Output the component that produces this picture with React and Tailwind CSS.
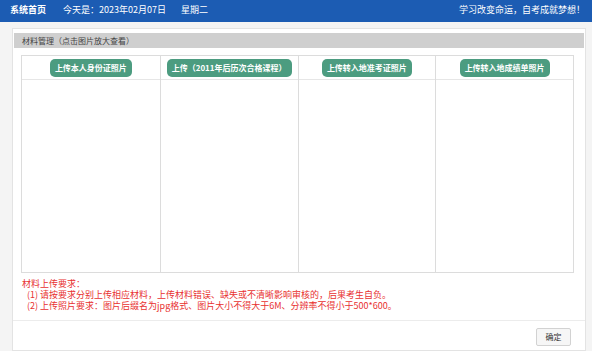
const UPLOADS = [
  "上传本人身份证照片",
  "上传（2011年后历次合格课程）",
  "上传转入地准考证照片",
  "上传转入地成绩单照片",
];

export default function App() {
  return (
    <div className="min-h-[351px] bg-[#f4f4f4] font-['Noto_Sans_CJK_SC',sans-serif] text-[#333]">
      <header className="flex h-[22px] items-center justify-between bg-[#1c5cb3] pb-[3px] pl-[10px] pr-[7px] text-[9px] leading-none text-white">
        <div className="flex items-center">
          <span className="font-bold">系统首页</span>
          <span className="ml-[17px]">今天是：2023年02月07日</span>
          <span className="ml-[15px]">星期二</span>
        </div>
        <span>学习改变命运，自考成就梦想！</span>
      </header>

      <div className="pl-[12px] pr-[6px] pt-[6px]">
        <div className="h-[323px] border border-[#e3e3e3] bg-white">
          <div className="mx-[1px] mt-[4px] flex h-[15px] items-center bg-[#cfcfcf] pl-[8px] text-[8px] leading-none text-[#444]">
            材料管理（点击图片放大查看）
          </div>

          <div className="ml-[8px] mr-[11px] mt-[7px] grid grid-cols-4 border border-[#dcdcdc]">
            {UPLOADS.map((label, i) => (
              <div
                key={label}
                className={`flex flex-col ${i > 0 ? "border-l border-[#dcdcdc]" : ""}`}
              >
                <div className="flex h-[24px] items-center justify-center border-b border-[#e6e6e6]">
                  <button className="h-[18px] rounded-[5px] bg-[#4c9c80] px-[5px] text-[8px] font-bold leading-none text-white">
                    {label}
                  </button>
                </div>
                <div className="h-[192px]" />
              </div>
            ))}
          </div>

          <div className="mt-[5px] pl-[9px] text-[9px] leading-[11px] text-[#e8312f]">
            <p>材料上传要求：</p>
            <p className="pl-[5px]">(1) 请按要求分别上传相应材料，上传材料错误、缺失或不清晰影响审核的，后果考生自负。</p>
            <p className="pl-[5px]">(2) 上传照片要求：图片后缀名为jpg格式、图片大小不得大于6M、分辨率不得小于500*600。</p>
          </div>

          <div className="mt-[9px] flex justify-end border-t border-[#ececec] pr-[14px] pt-[7px]">
            <button className="h-[18px] w-[35px] rounded-[2px] border border-[#d2d2d2] bg-[#f6f6f6] text-[8px] leading-none text-[#333]">
              确定
            </button>
          </div>
        </div>
      </div>
    </div>
  );
}
